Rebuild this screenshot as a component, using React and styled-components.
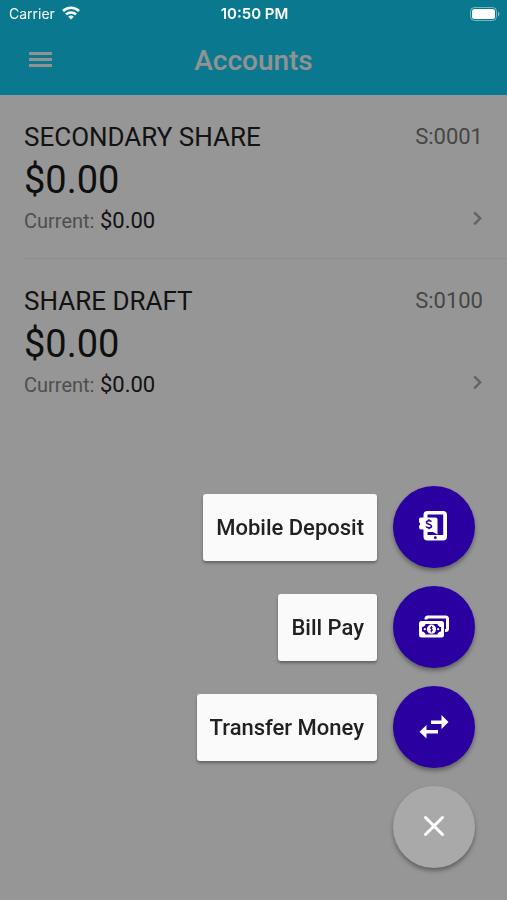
import React from 'react';
import styled, { createGlobalStyle } from 'styled-components';

const GlobalStyle = createGlobalStyle`
  * {
    box-sizing: border-box;
  }
  body {
    background-color: #fafafa;
    font-family: Roboto, 'Liberation Sans', sans-serif;
    margin: 0px;
  }
  button {
    border: none;
    cursor: pointer;
    font-family: inherit;
    padding: 0px;
  }
`;

const StatusBar = styled.div`
  align-items: center;
  color: #fff;
  display: grid;
  font-family: Inter, sans-serif;
  font-size: 14px;
  grid-template-columns: 1fr auto 1fr;
  height: 27px;
  left: 0px;
  padding: 0px 7px 0px 9px;
  position: fixed;
  right: 0px;
  top: 0px;
  z-index: 3;
  .carrier {
    align-items: center;
    display: flex;
    gap: 7px;
  }
  .time {
    font-size: 15px;
    font-weight: 600;
  }
  .battery {
    display: flex;
    justify-content: flex-end;
  }
`;

const Header = styled.header`
  align-items: center;
  background-color: #11caee;
  color: #f4f4f4;
  display: grid;
  grid-template-columns: 1fr auto 1fr;
  height: 95px;
  padding: 27px 28px 0px;
  h1 {
    font-size: 28px;
    font-weight: 500;
    line-height: 32px;
    margin: 0px;
  }
`;

const MenuButton = styled.button`
  background: none;
  color: inherit;
  display: flex;
  justify-self: start;
`;

const AccountList = styled.ul`
  list-style: none;
  margin: 0px;
  padding: 0px 0px 0px 24px;
`;

const AccountItem = styled.li`
  border-bottom: 1px solid ${({ $last }) => ($last ? 'transparent' : '#ececec')};
  padding: 27px 24px 24px 0px;
`;

const AccountRow = styled.div`
  align-items: center;
  display: flex;
  justify-content: space-between;
`;

const AccountName = styled.h2`
  color: #212121;
  font-size: 26px;
  font-weight: 400;
  line-height: 30px;
  margin: 0px;
`;

const AccountCode = styled.span`
  color: #757575;
  font-size: 22px;
  line-height: 30px;
`;

const Amount = styled.p`
  color: #1a1a1a;
  font-size: 38px;
  line-height: 44px;
  margin: 6px 0px;
`;

const Current = styled.p`
  color: #212121;
  font-size: 22px;
  line-height: 26px;
  margin: 0px;
  span {
    color: #848484;
    font-size: 20px;
  }
`;

const Backdrop = styled.div`
  background-color: rgba(0, 0, 0, 0.4);
  inset: 0px;
  position: fixed;
  z-index: 1;
`;

const SpeedDial = styled.div`
  align-items: flex-end;
  bottom: 32px;
  display: flex;
  flex-direction: column;
  gap: 18px;
  position: fixed;
  right: 32px;
  z-index: 2;
`;

const Action = styled.div`
  align-items: center;
  display: flex;
  gap: 16px;
`;

const ActionLabel = styled.label`
  background-color: #fafafa;
  border-radius: 3px;
  box-shadow: 0px 2px 3px rgba(0, 0, 0, 0.35);
  color: #212121;
  cursor: pointer;
  font-size: 22px;
  font-weight: 500;
  line-height: 27px;
  padding: 20px 13px;
`;

const Fab = styled.button`
  align-items: center;
  background-color: ${({ $color }) => $color};
  border-radius: 50%;
  box-shadow: 0px 3px 4px rgba(0, 0, 0, 0.35);
  color: #fff;
  display: flex;
  height: 82px;
  justify-content: center;
  width: 82px;
`;

const WifiIcon = () => (
  <svg width='18' height='16' viewBox='0 0 18 16' fill='none' stroke='#fff' strokeWidth='2.6'>
    <path d='M1 5a11.6 11.6 0 0 1 16 0' />
    <path d='M4 8.400a7.4 7.4 0 0 1 10 0' />
    <path d='M9 13.6 6.2 10.8a4 4 0 0 1 5.6 0Z' fill='#fff' stroke='none' />
  </svg>
);

const BatteryIcon = () => (
  <svg width='30' height='14' viewBox='0 0 30 14'>
    <rect x='0.5' y='0.5' width='26' height='13' rx='4' fill='none' stroke='#fff' strokeOpacity='0.45' />
    <rect x='2' y='2' width='23' height='10' rx='2.5' fill='#fff' />
    <path d='M28 4.7c1.8.6 1.8 4 0 4.6Z' fill='#fff' fillOpacity='0.5' />
  </svg>
);

const MenuIcon = () => (
  <svg width='24' height='20' viewBox='0 0 24 20' fill='currentColor'>
    <path d='M1 1h23v3H1zM1 7h23v3H1zM1 13h23v3H1z' />
  </svg>
);

const ChevronIcon = () => (
  <svg width='10' height='20' viewBox='0 0 10 20' fill='none' stroke='#a6a6a6' strokeWidth='2.4'>
    <path d='M1.200 1.300 7.200 7.300 1.200 13.300' />
  </svg>
);

const DepositIcon = () => (
  <svg width='32' height='32' viewBox='0 1 32 32'>
    <path
      fill='#fff'
      fillRule='evenodd'
      d='M9.500 1H25a4 4 0 0 1 4 4v21.500a4 4 0 0 1-4 4H9.500a4 4 0 0 1-4-4V5a4 4 0 0 1 4-4ZM9.500 4.500v20.500h15.700V4.500Z'
    />
    <path
      fill='#fff'
      d='M3.200 7.500H17.500a2 2 0 0 1 2 2V24.500l-4.500-2.500H9V19.500H3a2 2 0 0 1-2-2v-1.500c1.300-.8 1.300-3.200 0-4V9.500a2 2 0 0 1 2.200-2Z'
    />
    <circle cx='17.300' cy='27.700' r='1.400' fill='#2b00a0' />
    <path
      d='M13.400 11.700c-.6-1.300-4.900-1.500-4.900.7 0 2.300 5 1.500 5 3.800 0 2.200-4.600 2-5.300.3M10.900 9.200v1.800M10.900 17.500v1.800'
      fill='none'
      stroke='#2b00a0'
      strokeWidth='1.600'
    />
  </svg>
);

const BillIcon = () => (
  <svg width='32' height='24' viewBox='0 0 32 24'>
    <path
      d='M8 4.500V4a2 2 0 0 1 2-2h17.500a2 2 0 0 1 2 2v9.500a2 2 0 0 1-2 2H27'
      fill='none'
      stroke='#fff'
      strokeWidth='3'
    />
    <rect x='1' y='6' width='25' height='16.500' rx='2.500' fill='#fff' />
    <path d='M7.500 9h12c.3 1.700 1.500 2.800 3.500 3v4.400c-2 .2-3.200 1.300-3.500 3h-12c-.3-1.700-1.500-2.800-3.500-3V12c2-.2 3.200-1.300 3.500-3Z' fill='#2b00a0' />
    <circle cx='13.500' cy='14.200' r='4.600' fill='#fff' />
    <circle cx='6.800' cy='14.200' r='1.100' fill='#fff' />
    <circle cx='20.200' cy='14.200' r='1.100' fill='#fff' />
    <path
      d='M14.800 12.800c-.5-.8-2.600-.8-2.600.3s2.600.9 2.600 2.100-2.200 1.100-2.700.2M13.500 11v6.400'
      fill='none'
      stroke='#2b00a0'
      strokeWidth='0.900'
    />
  </svg>
);

const TransferIcon = () => (
  <svg width='30' height='24' viewBox='0 0 30 24' fill='#fff'>
    <path d='M12 5.500h10.500V0L29.500 7 22.500 14V9H12z' />
    <path d='M19 15H7.500V10L0.500 16.700 7.500 23.500V18.500H19z' />
  </svg>
);

const CloseIcon = () => (
  <svg width='22' height='24' viewBox='0 0 22 24' stroke='#fff' strokeWidth='3' strokeLinecap='round'>
    <path d='M2.500 2.500l17 17M19.500 2.500l-17 17' />
  </svg>
);

const accounts = [
  { name: 'SECONDARY SHARE', code: 'S:0001', amount: '$0.00', current: '$0.00' },
  { name: 'SHARE DRAFT', code: 'S:0100', amount: '$0.00', current: '$0.00' },
];

const actions = [
  { id: 'deposit', title: 'Mobile Deposit', icon: <DepositIcon /> },
  { id: 'bill-pay', title: 'Bill Pay', icon: <BillIcon /> },
  { id: 'transfer', title: 'Transfer Money', icon: <TransferIcon /> },
];

function App() {
  return (
    <>
      <GlobalStyle />
      <StatusBar>
        <div className='carrier'>
          <span>Carrier</span>
          <WifiIcon />
        </div>
        <span className='time'>10:50 PM</span>
        <div className='battery'>
          <BatteryIcon />
        </div>
      </StatusBar>
      <Header>
        <MenuButton aria-label='Menu'>
          <MenuIcon />
        </MenuButton>
        <h1>Accounts</h1>
      </Header>
      <AccountList>
        {accounts.map((account, index) => (
          <AccountItem key={account.code} $last={index === accounts.length - 1}>
            <AccountRow>
              <AccountName>{account.name}</AccountName>
              <AccountCode>{account.code}</AccountCode>
            </AccountRow>
            <Amount>{account.amount}</Amount>
            <AccountRow>
              <Current>
                <span>Current:</span> {account.current}
              </Current>
              <ChevronIcon />
            </AccountRow>
          </AccountItem>
        ))}
      </AccountList>
      <Backdrop />
      <SpeedDial>
        {actions.map((action) => (
          <Action key={action.id}>
            <ActionLabel htmlFor={action.id}>{action.title}</ActionLabel>
            <Fab id={action.id} $color='#2b00a0'>
              {action.icon}
            </Fab>
          </Action>
        ))}
        <Fab aria-label='Close' $color='#a9a9a9'>
          <CloseIcon />
        </Fab>
      </SpeedDial>
    </>
  );
}

export default App;
